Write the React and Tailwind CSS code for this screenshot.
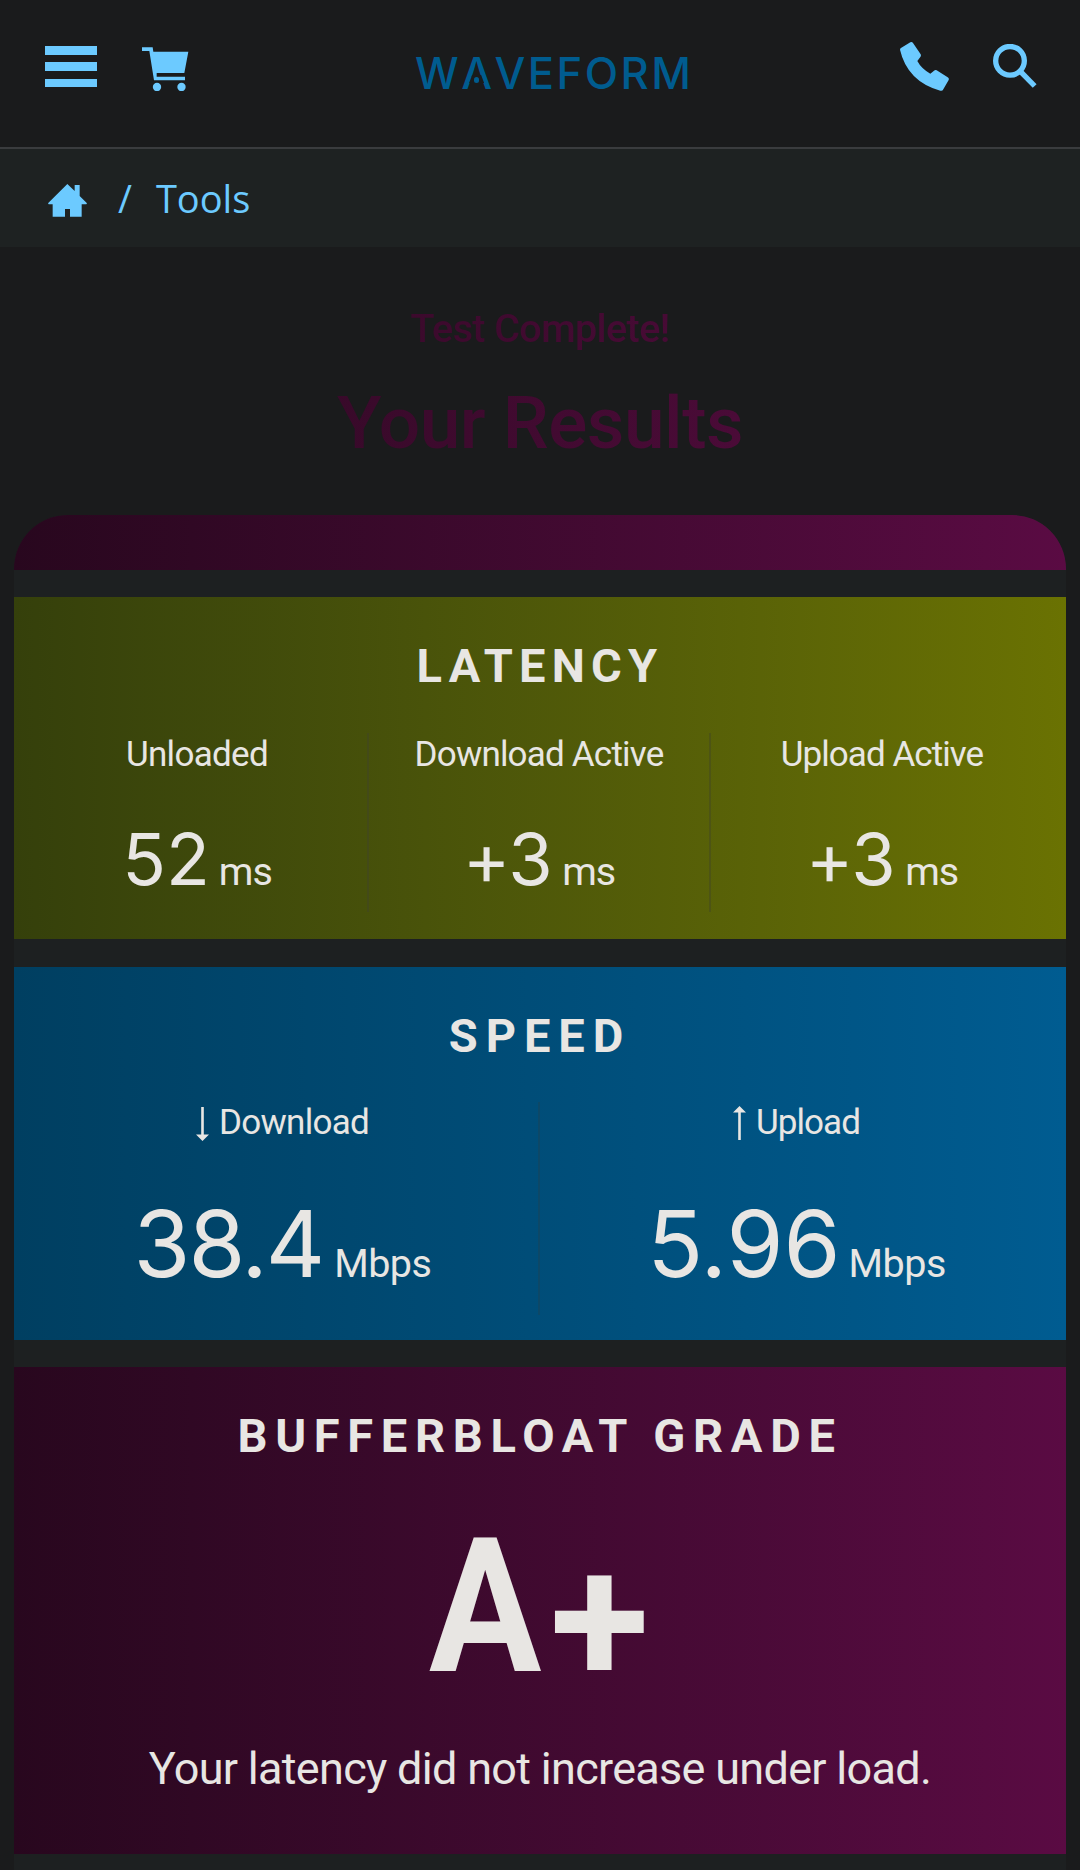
import React from 'react';

function MenuIcon() {
  return (
    <div className="mt-[46px] flex h-[41px] w-[52px] flex-col justify-between">
      <span className="h-[8.5px] bg-[#6ccaff]" />
      <span className="h-[8.5px] bg-[#6ccaff]" />
      <span className="h-[8.5px] bg-[#6ccaff]" />
    </div>
  );
}

function CartIcon() {
  return (
    <svg className="mt-[47px] h-11 w-[47px] fill-[#6ccaff]" viewBox="0 0 141 132">
      <path d="M0 1H32L34 14H139L127 78H44V89H129V100H36L22 12H0Z" />
      <circle cx="45" cy="120" r="12.5" />
      <circle cx="118.500" cy="120" r="12.5" />
    </svg>
  );
}

function PhoneIcon() {
  return (
    <svg className="mt-[42px] h-[49px] w-[49px] fill-[#6ccaff]" viewBox="0 0 147 147">
      <path d="M4 17L31 1Q36 -1 39 3L62 37Q64 41 61 45L52 57Q64 80 91 95L102 86Q106 83 110 85L143 106Q148 109 146 114L130 142Q127 148 121 146Q22 118 0 23Q0 19 4 17Z" />
    </svg>
  );
}

function SearchIcon() {
  return (
    <svg className="mt-[44px] h-11 w-11" viewBox="0 0 132 132" fill="none" stroke="#6ccaff" strokeWidth="16">
      <circle cx="51" cy="50.500" r="43" />
      <path d="M82 82L125 126" />
    </svg>
  );
}

function HomeIcon() {
  return (
    <svg className="h-[33px] w-[39px] fill-[#6ccaff]" viewBox="0 0 117 99">
      <path d="M58 0L80 21V3H95V36L117 58L115 61H101V98H66V75H51V98H14V61H2L0 58Z" />
    </svg>
  );
}

function ArrowDown() {
  return (
    <svg className="h-[34px] w-[13px] fill-[#e8e6e3]" viewBox="0 0 13 34">
      <path d="M5.200 0H7.800V27.500H13L6.500 34L0 27.500H5.200Z" />
    </svg>
  );
}

function ArrowUp() {
  return (
    <svg className="h-[34px] w-[13px] fill-[#e8e6e3]" viewBox="0 0 13 34">
      <path d="M6.500 0L13 6.500H7.800V34H5.200V6.500H0Z" />
    </svg>
  );
}

function Logo() {
  return (
    <div className="mt-[48px] flex-1 text-[43.500px] leading-[50px] font-medium tracking-[2.500px] text-[#005c8f] font-['Inter',sans-serif] [font-kerning:none]">
      W
      <span className="relative">
        A
        <span className="absolute top-[28px] left-[8px] h-[8px] w-[15px] bg-[#1a1b1c] [clip-path:polygon(20%_0,80%_0,100%_100%,0_100%)]" />
        <span className="absolute top-[30px] left-[12.500px] h-[5.500px] w-[5.500px] rounded-full bg-[#005c8f]" />
      </span>
      VEFORM
    </div>
  );
}

function Title({ className, children }) {
  return <h2 className={`h-14 text-center text-[47px] leading-[56px] font-bold ${className}`}>{children}</h2>;
}

export default function App() {
  return (
    <div className="flex h-[1870px] w-[1080px] flex-col overflow-hidden bg-[#1a1b1c] text-[#e8e6e3] font-['Roboto',sans-serif]">
      <header className="flex h-[149px] shrink-0 items-start border-b-2 border-[#3a3c3e]">
        <div className="flex w-[415px] gap-[45px] pl-[45px]">
          <MenuIcon />
          <CartIcon />
        </div>
        <Logo />
        <div className="flex gap-[44px] pr-[43px]">
          <PhoneIcon />
          <SearchIcon />
        </div>
      </header>

      <nav className="flex h-[98px] shrink-0 items-start bg-[#1e2222] pl-12 text-[38px] leading-[52px] text-[#6ccaff] font-['Open_Sans',sans-serif]">
        <span className="pt-[35px]">
          <HomeIcon />
        </span>
        <span className="mt-[23px] ml-[31px]">/</span>
        <span className="mt-[23px] ml-[24px]">Tools</span>
      </nav>

      <div className="flex h-[268px] shrink-0 flex-col bg-linear-to-r from-[#2a081f] to-[#5a0b43] bg-clip-text pt-[58px] text-center font-medium text-transparent">
        <p className="text-[39.500px] leading-[48px] tracking-[-0.600px]">Test Complete!</p>
        <h1 className="mt-[26px] text-[73px] leading-[88px] tracking-[-0.480px]">Your Results</h1>
      </div>

      <main className="mx-[14px] flex shrink-0 flex-col gap-[27px] rounded-t-[54px] bg-[#1d2021] pb-[27px]">
        <div className="h-[55px] rounded-t-[54px] bg-linear-to-r from-[#28071e] to-[#5a0b43]" />

        <section className="h-[342px] bg-linear-to-r from-[#35400b] to-[#6a7202] px-[13px] pt-[41px]">
          <Title className="tracking-[6.240px]">LATENCY</Title>
          <div className="mt-[39px] grid h-[179px] grid-cols-3 text-center">
            <div className="border-r-2 border-[#434a18]">
              <p className="pt-px text-[35px] leading-[42px] tracking-[-0.700px]">Unloaded</p>
              <p className="mt-[31px] flex items-baseline justify-center text-[72px] leading-[104px]">
                <span className="font-['Inter',sans-serif]">52</span>
                <span className="ml-[9px] text-[39.500px] leading-none tracking-[-1px]">ms</span>
              </p>
            </div>
            <div className="border-r-2 border-[#4d5414]">
              <p className="pt-px text-[35px] leading-[42px] tracking-[-0.800px]">Download Active</p>
              <p className="mt-[31px] flex items-baseline justify-center text-[72px] leading-[104px]">
                <span className="tracking-[-1.500px] font-['Inter',sans-serif]">+3</span>
                <span className="ml-[11px] text-[39.500px] leading-none tracking-[-1px]">ms</span>
              </p>
            </div>
            <div>
              <p className="pt-px text-[35px] leading-[42px] tracking-[-0.950px]">Upload Active</p>
              <p className="mt-[31px] flex items-baseline justify-center text-[72px] leading-[104px]">
                <span className="tracking-[-1.500px] font-['Inter',sans-serif]">+3</span>
                <span className="ml-[11px] text-[39.500px] leading-none tracking-[-1px]">ms</span>
              </p>
            </div>
          </div>
        </section>

        <section className="mt-px h-[373px] bg-linear-to-r from-[#003f61] to-[#005c91] px-[13px] pt-[41px]">
          <Title className="tracking-[7.930px]">SPEED</Title>
          <div className="mt-[38px] grid h-[213px] grid-cols-2">
            <div className="border-r-2 border-[#0c4868]">
              <div className="flex items-start justify-center gap-[10px] text-[35px] leading-[42px]">
                <span className="mt-[5px]">
                  <ArrowDown />
                </span>
                <span className="tracking-[-0.700px]">Download</span>
              </div>
              <p className="mt-[33px] flex items-baseline justify-center text-[92px] leading-[134px]">
                <span className="tracking-[-2px] font-['Inter',sans-serif]">38.4</span>
                <span className="ml-[11px] text-[39.500px] leading-none tracking-[-0.500px]">Mbps</span>
              </p>
            </div>
            <div>
              <div className="flex items-start justify-center gap-[10px] text-[35px] leading-[42px]">
                <span className="mt-1">
                  <ArrowUp />
                </span>
                <span className="tracking-[-0.950px]">Upload</span>
              </div>
              <p className="mt-[33px] flex items-baseline justify-center text-[92px] leading-[134px]">
                <span className="font-['Inter',sans-serif]">5.96</span>
                <span className="ml-[8px] text-[39.500px] leading-none tracking-[-0.500px]">Mbps</span>
              </p>
            </div>
          </div>
        </section>

        <section className="h-[487px] bg-linear-to-r from-[#28071e] to-[#5a0b43] pt-[41px]">
          <Title className="tracking-[7.710px]">BUFFERBLOAT GRADE</Title>
          <p className="mt-[49px] flex justify-center pr-[2px] text-[188px] leading-[188px] font-bold">
            <span className="w-[112px]">
              <span className="inline-block origin-left scale-x-[0.890]">A</span>
            </span>
            <span className="relative top-[14px] ml-[9px] text-[182px]">+</span>
          </p>
          <p className="mt-[41px] text-center text-[45px] leading-[54px] tracking-[-0.700px]">
            Your latency did not increase under load.
          </p>
        </section>
      </main>
    </div>
  );
}
